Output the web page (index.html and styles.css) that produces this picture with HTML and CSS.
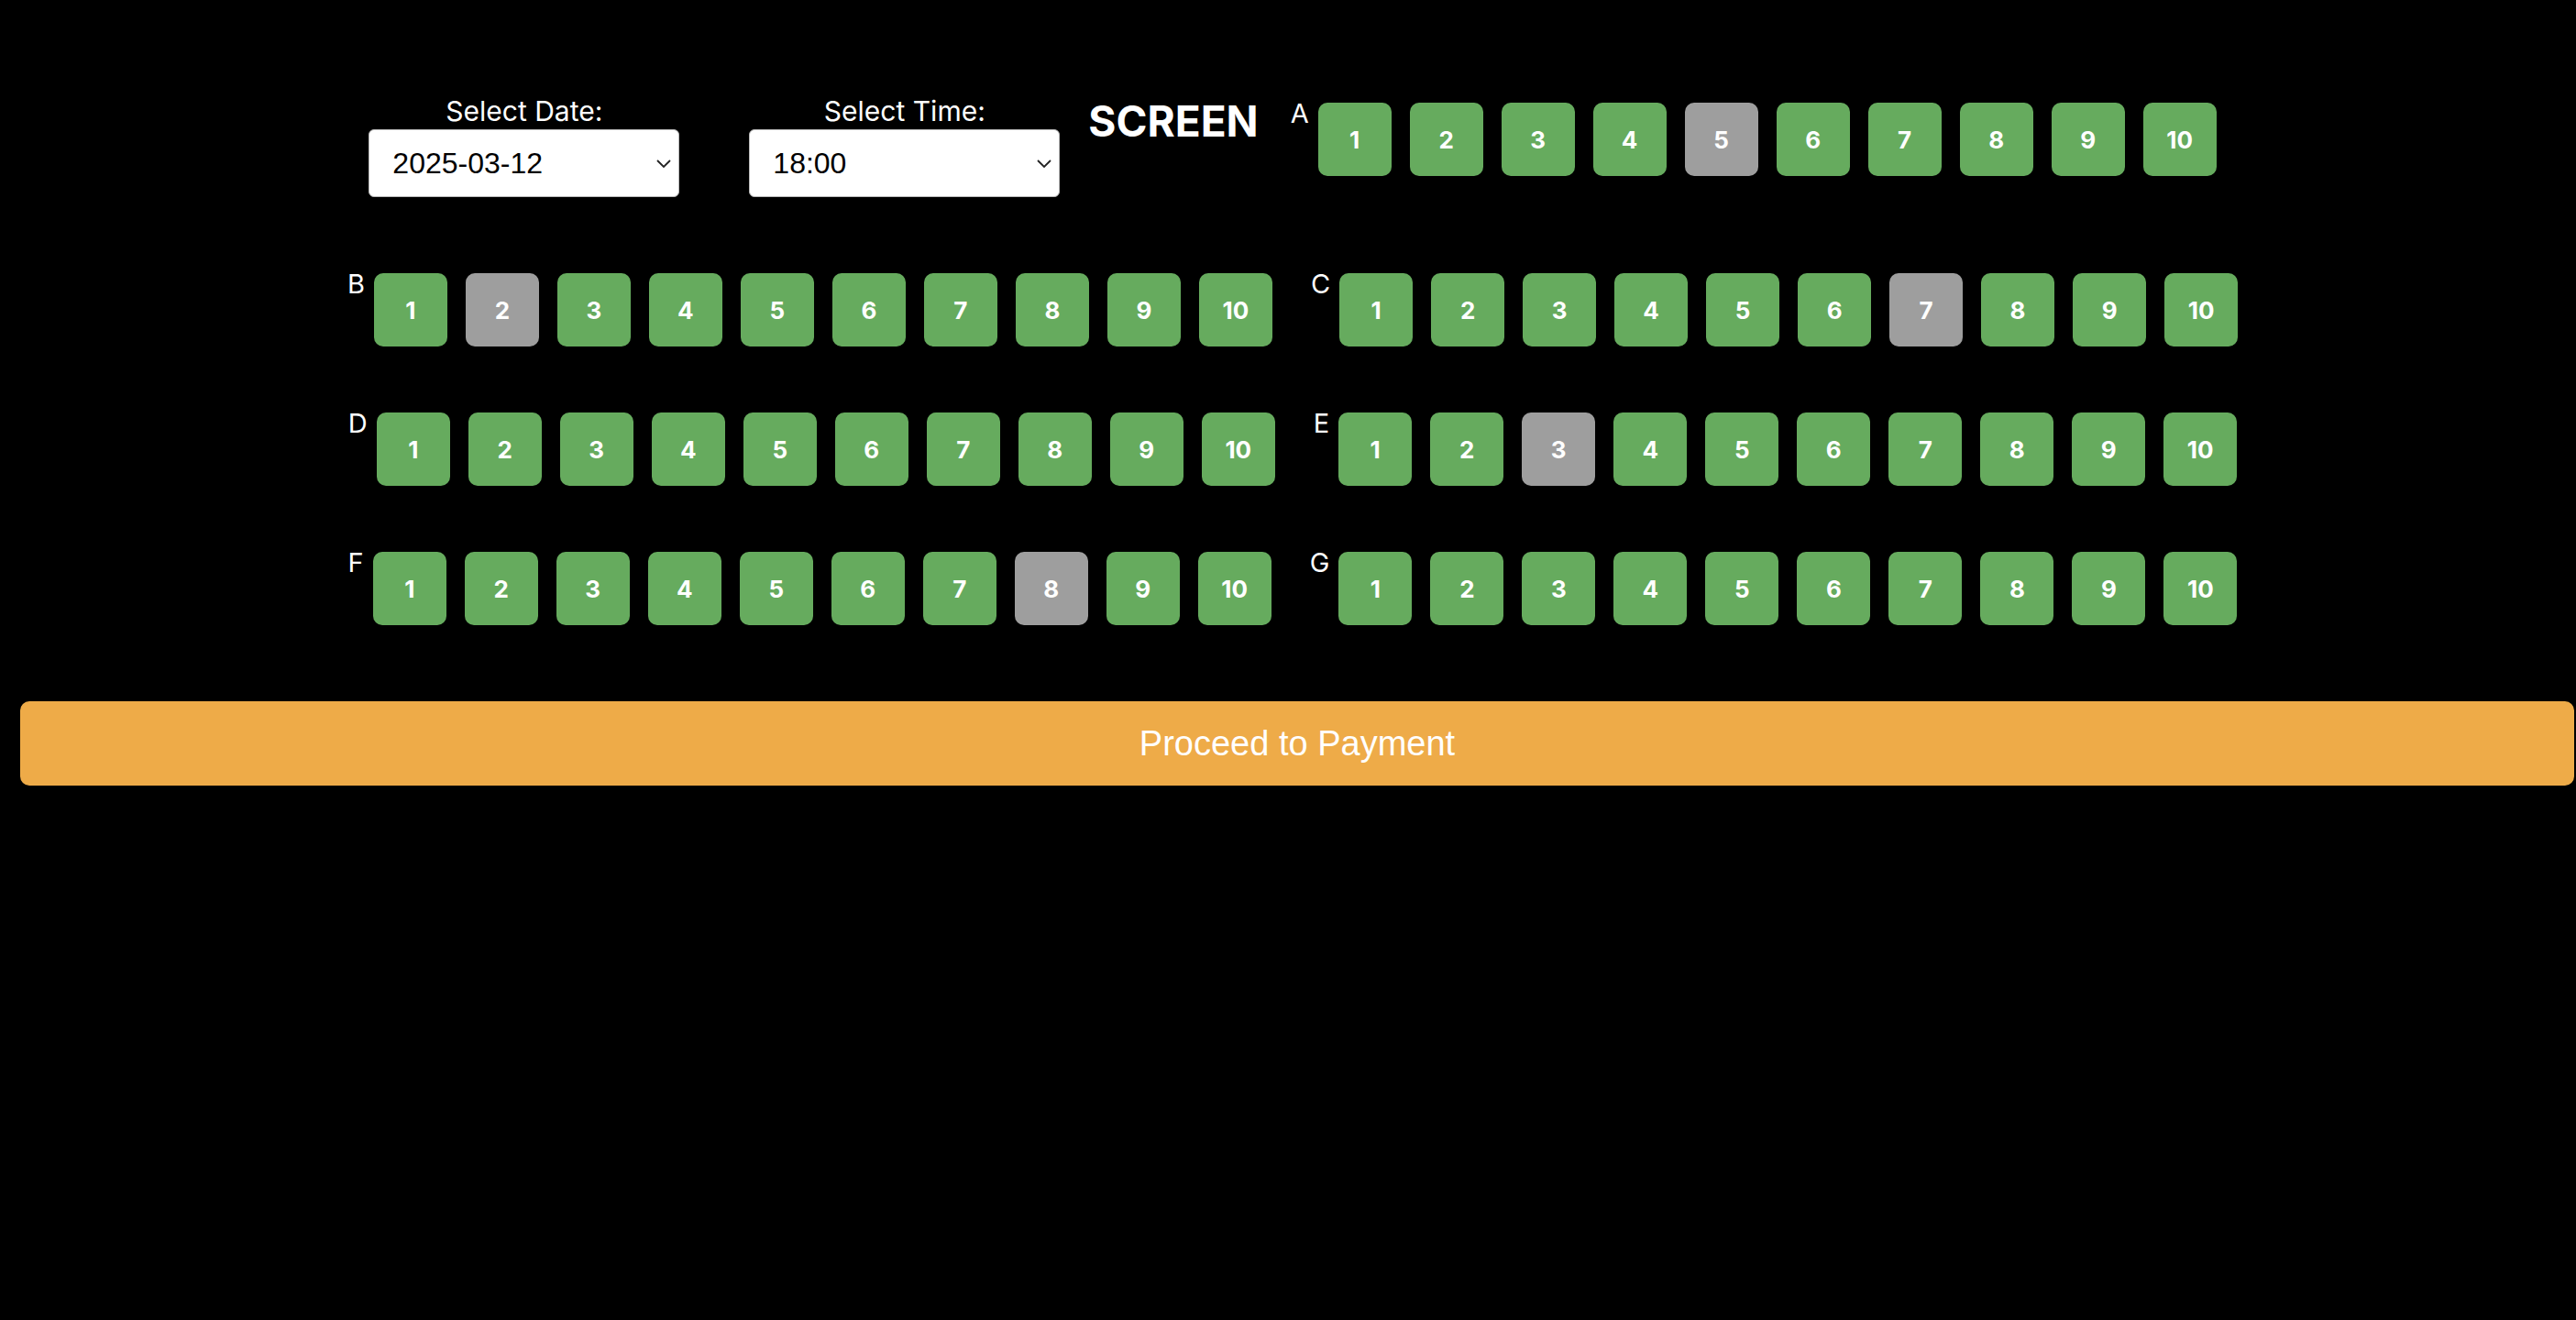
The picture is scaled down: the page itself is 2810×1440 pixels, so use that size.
FILE: index.html
```html
<!DOCTYPE html>
<html lang="en">
  <head>
    <meta charset="UTF-8" />
    <meta name="viewport" content="width=device-width, initial-scale=1.0" />
    <title>Select Seats</title>
    <link rel="stylesheet" href="styles.css">
  </head>
  <body>
    <div class="page">
      <div class="seat-map">
        <div class="picker">
          <label for="date-select">Select Date:</label>
          <div class="select-wrap">
            <select id="date-select">
              <option>2025-03-12</option>
              <option>2025-03-13</option>
              <option>2025-03-14</option>
            </select>
            <svg class="chevron" viewBox="0 0 16 9"><path d="M1 1l7 7 7-7" fill="none" stroke="#222" stroke-width="1.8" /></svg>
          </div>
        </div>
        <div class="picker">
          <label for="time-select">Select Time:</label>
          <div class="select-wrap">
            <select id="time-select">
              <option>18:00</option>
              <option>20:30</option>
            </select>
            <svg class="chevron" viewBox="0 0 16 9"><path d="M1 1l7 7 7-7" fill="none" stroke="#222" stroke-width="1.8" /></svg>
          </div>
        </div>
        <h2 class="screen">SCREEN</h2>

        <div class="row">
          <span class="row-label">A</span>
          <button class="seat">1</button><button class="seat">2</button><button class="seat">3</button><button class="seat">4</button><button class="seat taken">5</button>
          <button class="seat">6</button><button class="seat">7</button><button class="seat">8</button><button class="seat">9</button><button class="seat">10</button>
        </div>
        <div class="row">
          <span class="row-label">B</span>
          <button class="seat">1</button><button class="seat taken">2</button><button class="seat">3</button><button class="seat">4</button><button class="seat">5</button>
          <button class="seat">6</button><button class="seat">7</button><button class="seat">8</button><button class="seat">9</button><button class="seat">10</button>
        </div>
        <div class="row">
          <span class="row-label">C</span>
          <button class="seat">1</button><button class="seat">2</button><button class="seat">3</button><button class="seat">4</button><button class="seat">5</button>
          <button class="seat">6</button><button class="seat taken">7</button><button class="seat">8</button><button class="seat">9</button><button class="seat">10</button>
        </div>
        <div class="row">
          <span class="row-label">D</span>
          <button class="seat">1</button><button class="seat">2</button><button class="seat">3</button><button class="seat">4</button><button class="seat">5</button>
          <button class="seat">6</button><button class="seat">7</button><button class="seat">8</button><button class="seat">9</button><button class="seat">10</button>
        </div>
        <div class="row">
          <span class="row-label">E</span>
          <button class="seat">1</button><button class="seat">2</button><button class="seat taken">3</button><button class="seat">4</button><button class="seat">5</button>
          <button class="seat">6</button><button class="seat">7</button><button class="seat">8</button><button class="seat">9</button><button class="seat">10</button>
        </div>
        <div class="row">
          <span class="row-label">F</span>
          <button class="seat">1</button><button class="seat">2</button><button class="seat">3</button><button class="seat">4</button><button class="seat">5</button>
          <button class="seat">6</button><button class="seat">7</button><button class="seat taken">8</button><button class="seat">9</button><button class="seat">10</button>
        </div>
        <div class="row">
          <span class="row-label">G</span>
          <button class="seat">1</button><button class="seat">2</button><button class="seat">3</button><button class="seat">4</button><button class="seat">5</button>
          <button class="seat">6</button><button class="seat">7</button><button class="seat">8</button><button class="seat">9</button><button class="seat">10</button>
        </div>
      </div>
      <button class="pay-btn">Proceed to Payment</button>
    </div>
  </body>
</html>
```

FILE: styles.css
```css
body {
  margin: 0;
  background-color: #000;
  color: #fff;
  font-family: Inter, "Noto Sans", sans-serif;
}
.page {
  padding: 0 2px 0 22px;
}
.seat-map {
  display: flex;
  flex-wrap: wrap;
  justify-content: center;
  align-items: flex-start;
  padding-top: 76px;
}
.picker {
  display: flex;
  flex-direction: column;
  align-items: center;
  margin: 28px 16px 47px;
}
.picker + .picker {
  margin-left: 60px;
}
.picker label {
  font-size: 30px;
  line-height: 35px;
  margin-bottom: 2px;
}
.select-wrap {
  position: relative;
}
.select-wrap select {
  appearance: none;
  -webkit-appearance: none;
  box-sizing: border-box;
  width: 339px;
  height: 74px;
  padding: 0 40px 0 25px;
  font-family: "Liberation Sans", Arial, sans-serif;
  font-size: 32px;
  color: #000;
  background-color: #fff;
  border: 1px solid #bbb;
  border-radius: 6px;
}
.chevron {
  position: absolute;
  right: 9px;
  top: 33px;
  width: 16px;
  height: 9px;
  pointer-events: none;
}
.screen {
  margin: 28px 19px 0 15px;
  font-size: 46px;
  font-weight: 700;
  line-height: 56px;
}
.row {
  display: flex;
  align-items: flex-start;
  margin: 30px 16px;
}
.row-label {
  font-size: 29px;
  line-height: 35px;
}
.seat {
  width: 80px;
  height: 80px;
  margin: 6px 10px;
  padding: 0;
  border: none;
  border-radius: 10px;
  background-color: #66ab5e;
  color: #fff;
  font-family: Inter, "Noto Sans", sans-serif;
  font-size: 26px;
  font-weight: 700;
  cursor: pointer;
}
.seat.taken {
  background-color: #9e9e9e;
  cursor: default;
}
.pay-btn {
  display: block;
  width: 100%;
  height: 92px;
  margin-top: 47px;
  border: none;
  border-radius: 10px;
  background-color: #eeab48;
  color: #fff;
  font-family: "Liberation Sans", Arial, sans-serif;
  font-size: 38px;
  cursor: pointer;
}
```
